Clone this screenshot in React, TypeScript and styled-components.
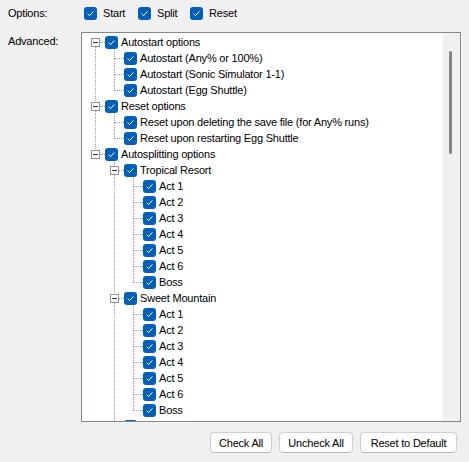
import React from 'react';
import styled, { createGlobalStyle } from 'styled-components';

const GlobalStyle = createGlobalStyle`
  html, body { margin: 0; padding: 0; background: #f0f0f0; }
  body {
    font-family: 'Liberation Sans', Arial, sans-serif;
    font-size: 11px;
    letter-spacing: -0.2px;
    color: #000;
  }
`;

const Page = styled.div`
  width: 469px;
  height: 462px;
  box-sizing: border-box;
  padding: 7px 8px 0 8px;
  display: grid;
  grid-template-columns: 73px 380px;
  grid-template-rows: 13px 12px 390px 10px 21px;
  align-items: start;
`;

const Label = styled.div<{ $row: number }>`
  grid-column: 1;
  grid-row: ${(p) => p.$row};
  line-height: 13px;
  padding-top: ${(p) => (p.$row === 3 ? '3px' : '0')};
`;

const OptionsRow = styled.div`
  grid-column: 2;
  grid-row: 1;
  display: flex;
  align-items: center;
  padding-left: 3px;
  height: 13px;
`;

const OptionItem = styled.label<{ $w?: number }>`
  display: flex;
  align-items: center;
  gap: 6px;
  width: ${(p) => (p.$w ? `${p.$w}px` : 'auto')};
  line-height: 13px;
`;

const Check = styled.span`
  width: 13px;
  height: 13px;
  flex: 0 0 13px;
  box-sizing: border-box;
  border-radius: 3px;
  background: #005fb8;
  display: flex;
  align-items: center;
  justify-content: center;
`;

const CheckMark = () => (
  <svg width="9" height="9" viewBox="0 0 9 9">
    <path d="M1.6 4.7 L3.6 6.6 L7.4 2.4" fill="none" stroke="#ffffff" strokeWidth="1" />
  </svg>
);

const TreeBox = styled.div`
  grid-column: 2;
  grid-row: 3;
  height: 390px;
  box-sizing: border-box;
  border: 1px solid #828790;
  background: #ffffff;
  display: flex;
  overflow: hidden;
`;

const TreeBody = styled.div`
  flex: 1;
  padding: 1px 0 0 4px;
  overflow: hidden;
`;

const ScrollTrack = styled.div`
  width: 17px;
  flex: 0 0 17px;
  background: #f0f0f0;
  display: flex;
  justify-content: center;
  padding-top: 18px;
  box-sizing: border-box;
`;

const ScrollThumb = styled.div`
  width: 3px;
  height: 103px;
  margin-left: -3px;
  border-radius: 2px;
  background: #858585;
`;

const Row = styled.div`
  display: flex;
  align-items: center;
  height: 16px;
  white-space: nowrap;
`;

const dotV = 'repeating-linear-gradient(to bottom, #a0a0a0 0 1px, transparent 1px 2px)';
const dotH = 'repeating-linear-gradient(to right, #a0a0a0 0 1px, transparent 1px 2px)';

const Indent = styled.span<{ $line: boolean }>`
  width: 19px;
  height: 16px;
  flex: 0 0 19px;
  background-image: ${(p) => (p.$line ? dotV : 'none')};
  background-repeat: no-repeat;
  background-size: 1px 16px;
  background-position: 9px 0;
`;

const Branch = styled.span<{ $up: boolean; $down: boolean }>`
  width: 19px;
  height: 16px;
  flex: 0 0 19px;
  display: flex;
  align-items: flex-start;
  background-image: ${dotV}, ${dotV}, ${dotH};
  background-repeat: no-repeat;
  background-size: 1px ${(p) => (p.$up ? '9px' : '0')}, 1px ${(p) => (p.$down ? '8px' : '0')}, 9px 1px;
  background-position: 9px 0, 9px 9px, 10px 8px;
`;

const Expander = styled.span`
  width: 9px;
  height: 9px;
  box-sizing: border-box;
  margin: 4px 0 0 5px;
  border: 1px solid #919191;
  background: #ffffff;
  display: flex;
  align-items: center;
  justify-content: center;
  &::after {
    content: '';
    width: 5px;
    height: 1px;
    background: #333333;
  }
`;

const ItemText = styled.span`
  margin-left: 3px;
  line-height: 16px;
`;

const ButtonBar = styled.div`
  grid-column: 2;
  grid-row: 5;
  display: flex;
  justify-content: flex-end;
  gap: 7px;
  padding-right: 4px;
`;

const Button = styled.button<{ $w: number }>`
  width: ${(p) => p.$w}px;
  height: 21px;
  box-sizing: border-box;
  padding: 0;
  border: 1px solid #d0d0d0;
  border-bottom-color: #bcbcbc;
  border-radius: 4px;
  background: #fdfdfd;
  font-family: 'Liberation Sans', Arial, sans-serif;
  font-size: 11px;
  letter-spacing: -0.2px;
  color: #000;
`;

type Node = { label: string; children?: Node[] };

const acts = (): Node[] => [
  ...[1, 2, 3, 4, 5, 6].map((n) => ({ label: `Act ${n}` })),
  { label: 'Boss' },
];

const tree: Node[] = [
  {
    label: 'Autostart options',
    children: [
      { label: 'Autostart (Any% or 100%)' },
      { label: 'Autostart (Sonic Simulator 1-1)' },
      { label: 'Autostart (Egg Shuttle)' },
    ],
  },
  {
    label: 'Reset options',
    children: [
      { label: 'Reset upon deleting the save file (for Any% runs)' },
      { label: 'Reset upon restarting Egg Shuttle' },
    ],
  },
  {
    label: 'Autosplitting options',
    children: [
      { label: 'Tropical Resort', children: acts() },
      { label: 'Sweet Mountain', children: acts() },
      { label: 'Starlight Carnival', children: acts() },
      { label: 'Planet Wisp', children: acts() },
    ],
  },
];

type FlatRow = { label: string; key: string; ancestorsMore: boolean[]; last: boolean; first: boolean; hasKids: boolean };

function flatten(nodes: Node[], ancestors: boolean[], out: FlatRow[], prefix: string, isRoot: boolean) {
  nodes.forEach((n, i) => {
    const last = i === nodes.length - 1;
    out.push({
      label: n.label,
      key: `${prefix}-${i}`,
      ancestorsMore: ancestors,
      last,
      first: isRoot && i === 0,
      hasKids: !!n.children,
    });
    if (n.children) flatten(n.children, [...ancestors, !last], out, `${prefix}-${i}`, false);
  });
}

const rows: FlatRow[] = [];
flatten(tree, [], rows, 'n', true);

const options = [
  { t: 'Start', w: 54 },
  { t: 'Split', w: 52 },
  { t: 'Reset' },
];

export default function App() {
  return (
    <>
      <GlobalStyle />
      <Page>
        <Label $row={1}>Options:</Label>
        <OptionsRow>
          {options.map((o) => (
            <OptionItem key={o.t} $w={o.w}>
              <Check>
                <CheckMark />
              </Check>
              {o.t}
            </OptionItem>
          ))}
        </OptionsRow>
        <Label $row={3}>Advanced:</Label>
        <TreeBox>
          <TreeBody>
            {rows.map((r) => (
              <Row key={r.key}>
                {r.ancestorsMore.map((m, i) => (
                  <Indent key={i} $line={m} />
                ))}
                <Branch $up={!r.first} $down={!r.last}>
                  {r.hasKids && <Expander />}
                </Branch>
                <Check>
                  <CheckMark />
                </Check>
                <ItemText>{r.label}</ItemText>
              </Row>
            ))}
          </TreeBody>
          <ScrollTrack>
            <ScrollThumb />
          </ScrollTrack>
        </TreeBox>
        <ButtonBar>
          <Button $w={62}>Check All</Button>
          <Button $w={74}>Uncheck All</Button>
          <Button $w={97}>Reset to Default</Button>
        </ButtonBar>
      </Page>
    </>
  );
}
